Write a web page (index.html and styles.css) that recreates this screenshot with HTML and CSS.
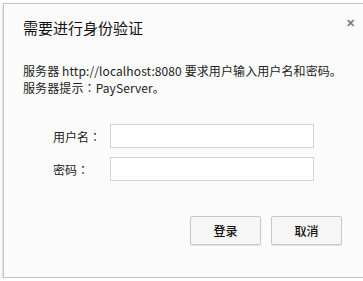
FILE: index.html
```html
<!DOCTYPE html>
<html>

<head>
	<title>需要进行身份验证</title>
	<link rel="stylesheet" href="styles.css">
</head>

<body>
	<div class="dialog">
		<span class="close">&#x2715;</span>
		<h1 class="title">需要进行身份验证</h1>
		<div class="message">
			<p>服务器 http://localhost:8080 要求用户输入用户名和密码。</p>
			<p>服务器提示<span class="colon">：</span>PayServer。</p>
		</div>
		<form class="login">
			<div class="field">
				<label for="user">用户名<span class="colon">：</span></label>
				<input type="text" id="user">
			</div>
			<div class="field">
				<label for="pass">密码<span class="colon">：</span></label>
				<input type="password" id="pass">
			</div>
			<div class="actions">
				<button type="submit">登录</button>
				<button type="button">取消</button>
			</div>
		</form>
	</div>
</body>

</html>
```

FILE: styles.css
```css
body {
	margin: 0;
	padding: 0;
	background-color: #ffffff;
	font-family: "Noto Sans CJK SC", "Liberation Sans", sans-serif;
	color: #222222;
	overflow: hidden;
}

.dialog {
	position: relative;
	box-sizing: border-box;
	margin: 3px 0 0 3px;
	width: 360px;
	height: 275px;
	padding: 13px 0 0 19px;
	background-color: #fbfbfb;
	border: 1px solid #c4c4c4;
	border-right: none;
	box-shadow: 0 2px 3px rgba(0, 0, 0, 0.25);
}

.close {
	position: absolute;
	top: 10px;
	left: 342px;
	font-size: 11px;
	font-weight: bold;
	color: #7b7b7b;
}

.title {
	margin: 0;
	font-size: 15px;
	font-weight: normal;
	line-height: 22px;
	color: #111111;
}

.message {
	margin-top: 23px;
	font-size: 12px;
	line-height: 17px;
	letter-spacing: 0.1px;
}

.message p {
	margin: 0;
}

/* centred full-width colon, as the system font draws it */
.colon {
	font-family: "Noto Sans CJK JP", sans-serif;
}

.login {
	margin-top: 28px;
}

.field {
	display: flex;
	align-items: center;
	margin-bottom: 9px;
}

.field label {
	width: 57px;
	padding-left: 30px;
	font-size: 12px;
}

.field input {
	box-sizing: border-box;
	width: 204px;
	height: 24px;
	margin: 0;
	border: 1px solid #d3d3d3;
	background-color: #ffffff;
}

.actions {
	display: flex;
	gap: 10px;
	margin-top: 35px;
	padding-left: 167px;
}

.actions button {
	box-sizing: border-box;
	width: 71px;
	height: 29px;
	margin: 0;
	border: 1px solid #c8c8c8;
	border-radius: 2px;
	background-color: #f6f6f6;
	box-shadow: 0 1px 1px rgba(0, 0, 0, 0.1);
	font-family: "Noto Sans CJK SC", sans-serif;
	font-size: 12px;
	font-weight: 500;
	color: #111111;
}
```
